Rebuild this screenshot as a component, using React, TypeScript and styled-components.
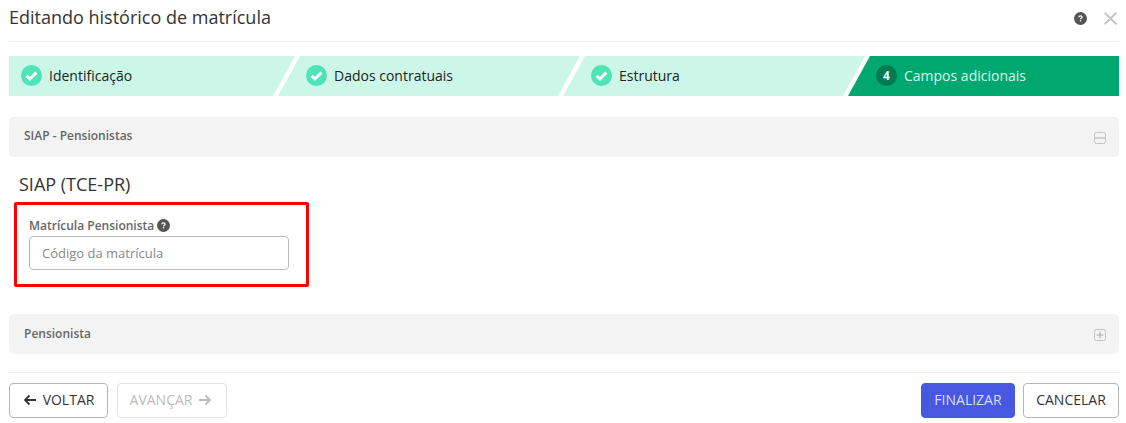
import React from 'react';
import styled, { createGlobalStyle } from 'styled-components';

const GlobalStyle = createGlobalStyle`
  html, body { margin: 0; padding: 0; background: #fff; }
  body { font-family: "Open Sans", "Liberation Sans", sans-serif; }
  * { box-sizing: border-box; }
`;

const Modal = styled.div`
  width: 1126px;
  height: 423px;
  padding: 0 7px 0 9px;
  display: flex;
  flex-direction: column;
  overflow: hidden;
`;

const Header = styled.header`
  height: 42px;
  padding-bottom: 6px;
  display: flex;
  align-items: center;
  justify-content: space-between;
  border-bottom: 1px solid #f0f0f0;
`;

const Title = styled.h1`
  margin: 0 0 2px;
  font-size: 18px;
  font-weight: 400;
  color: #333;
`;

const HeaderActions = styled.div`
  display: flex;
  align-items: center;
  gap: 17px;
  padding: 1px 2px 0 0;
`;

const Steps = styled.div`
  display: flex;
  margin-top: 14px;
  height: 40px;
`;

type StepPos = 'first' | 'middle' | 'last';

const clipFor: Record<StepPos, string> = {
  first: 'polygon(0 0, 100% 0, calc(100% - 22px) 100%, 0 100%)',
  middle: 'polygon(22px 0, 100% 0, calc(100% - 22px) 100%, 0 100%)',
  last: 'polygon(22px 0, 100% 0, 100% 100%, 0 100%)',
};

const Step = styled.div<{ $pos: StepPos; $active?: boolean; $width: number }>`
  flex: 0 0 ${(p) => p.$width}px;
  margin-left: ${(p) => (p.$pos === 'first' ? '0' : '-17px')};
  padding-left: ${(p) => (p.$pos === 'first' ? '12px' : '28px')};
  padding-bottom: 1px;
  display: flex;
  align-items: center;
  gap: 7px;
  font-size: 14px;
  background: ${(p) => (p.$active ? '#00a870' : '#ccf7e8')};
  color: ${(p) => (p.$active ? '#d5f8ea' : '#222')};
  clip-path: ${(p) => clipFor[p.$pos]};
`;

const StepNumber = styled.span`
  width: 21px;
  height: 21px;
  border-radius: 50%;
  background: #007a55;
  color: #e6faf2;
  font-size: 12px;
  font-weight: 700;
  display: flex;
  align-items: center;
  justify-content: center;
`;

const Section = styled.div<{ $mt: number; $pb: number }>`
  margin-top: ${(p) => p.$mt}px;
  height: 40px;
  padding: 0 13px ${(p) => p.$pb}px 15px;
  display: flex;
  align-items: center;
  justify-content: space-between;
  background: #f3f3f3;
  border-radius: 5px;
  font-size: 12px;
  font-weight: 600;
  color: #666;
`;

const SectionToggle = styled.span<{ $mt: number }>`
  display: flex;
  margin-top: ${(p) => p.$mt}px;
`;

const Body = styled.div`
  padding: 16px 0 0 5px;
`;

const GroupTitle = styled.h2`
  margin: 0 0 7px 5px;
  font-size: 18px;
  line-height: 22px;
  font-weight: 400;
  color: #333;
`;

const Highlight = styled.div`
  width: 295px;
  height: 85px;
  padding: 12px 0 0 12px;
  border: 3px solid #ff0000;
  border-radius: 2px;
`;

const Label = styled.label`
  display: flex;
  align-items: center;
  gap: 3px;
  height: 16px;
  margin-bottom: 3px;
  font-size: 12px;
  font-weight: 600;
  color: #666;
`;

const Input = styled.input`
  display: block;
  width: 260px;
  height: 34px;
  padding: 0 12px;
  border: 1px solid #bbb;
  border-radius: 4px;
  font-family: inherit;
  font-size: 13px;
  outline: none;
  &::placeholder { color: #888; opacity: 1; }
`;

const Footer = styled.footer`
  margin-top: 18px;
  padding-top: 10px;
  border-top: 1px solid #f0f0f0;
  display: flex;
  justify-content: space-between;
`;

const ButtonGroup = styled.div<{ $gap: number }>`
  display: flex;
  gap: ${(p) => p.$gap}px;
`;

const Button = styled.button<{ $variant?: 'primary' | 'disabled'; $width: number }>`
  width: ${(p) => p.$width}px;
  height: 35px;
  padding: 0 ${(p) => (p.$variant === 'disabled' ? '2px' : '0')} 2px 0;
  display: flex;
  align-items: center;
  justify-content: center;
  gap: 6px;
  font-family: inherit;
  font-size: 14px;
  border-radius: 4px;
  background: ${(p) => (p.$variant === 'primary' ? '#4759e0' : '#fff')};
  border: 1px solid ${(p) => (p.$variant === 'primary' ? '#4759e0' : p.$variant === 'disabled' ? '#e2e2e2' : '#b5b5b5')};
  color: ${(p) => (p.$variant === 'primary' ? '#d9defa' : p.$variant === 'disabled' ? '#bbb' : '#333')};
`;

const CheckIcon = () => (
  <svg width="21" height="21" viewBox="0 0 21 21">
    <circle cx="10.5" cy="10.5" r="10.5" fill="#4fe3b8" />
    <path d="M5.6 10.8l3.3 3.2 6.5-6.4" fill="none" stroke="#fff" strokeWidth="3" />
  </svg>
);

const HelpIcon = () => (
  <svg width="13" height="13" viewBox="0 0 12 12">
    <circle cx="6" cy="6" r="6" fill="#555" />
    <path d="M4.5 4.8c0-.9.7-1.3 1.5-1.3s1.5.4 1.5 1.2c0 1.1-1.5 1-1.5 2" fill="none" stroke="#fff" strokeWidth="1.1" />
    <rect x="5.4" y="7.5" width="1.2" height="1.2" fill="#fff" />
  </svg>
);

const CloseIcon = () => (
  <svg width="13" height="13" viewBox="0 0 13 13">
    <path d="M.7.7l11.6 11.6M12.3.7L.7 12.3" stroke="#c4c4c4" strokeWidth="2" fill="none" />
  </svg>
);

const BoxIcon = ({ plus }: { plus?: boolean }) => (
  <SectionToggle $mt={plus ? 3 : 5}>
    <svg width="12" height="12" viewBox="0 0 12 12">
      <rect x=".5" y=".5" width="11" height="11" rx="2" fill="none" stroke="#c4c4c4" />
      <path d={plus ? 'M2.5 6h7' : 'M1 6h10'} stroke="#aaa" />
      {plus && <path d="M6 2.5v7" stroke="#aaa" />}
    </svg>
  </SectionToggle>
);

const ArrowIcon = ({ right, color }: { right?: boolean; color: string }) => (
  <svg width="14" height="12" viewBox="0 0 14 12">
    {right ? (
      <path d="M1 6h11M7.5 1.5L12 6l-4.5 4.5" fill="none" stroke={color} strokeWidth="1.8" />
    ) : (
      <path d="M13 6H2M6.5 1.5L2 6l4.5 4.5" fill="none" stroke={color} strokeWidth="1.8" />
    )}
  </svg>
);

export default function App() {
  return (
    <Modal>
      <GlobalStyle />
      <Header>
        <Title>Editando histórico de matrícula</Title>
        <HeaderActions>
          <HelpIcon />
          <CloseIcon />
        </HeaderActions>
      </Header>

      <Steps>
        <Step $pos="first" $width={286}>
          <CheckIcon />
          Identificação
        </Step>
        <Step $pos="middle" $width={302}>
          <CheckIcon />
          Dados contratuais
        </Step>
        <Step $pos="middle" $width={302}>
          <CheckIcon />
          Estrutura
        </Step>
        <Step $pos="last" $width={271} $active>
          <StepNumber>4</StepNumber>
          Campos adicionais
        </Step>
      </Steps>

      <Section $mt={21} $pb={4}>
        SIAP - Pensionistas
        <BoxIcon />
      </Section>

      <Body>
        <GroupTitle>SIAP (TCE-PR)</GroupTitle>
        <Highlight>
          <Label>
            Matrícula Pensionista
            <HelpIcon />
          </Label>
          <Input placeholder="Código da matrícula" />
        </Highlight>
      </Body>

      <Section $mt={27} $pb={2}>
        Pensionista
        <BoxIcon plus />
      </Section>

      <Footer>
        <ButtonGroup $gap={9}>
          <Button $width={99}>
            <ArrowIcon color="#333" />
            VOLTAR
          </Button>
          <Button $width={110} $variant="disabled">
            AVANÇAR
            <ArrowIcon right color="#bbb" />
          </Button>
        </ButtonGroup>
        <ButtonGroup $gap={8}>
          <Button $width={94} $variant="primary">
            FINALIZAR
          </Button>
          <Button $width={96}>CANCELAR</Button>
        </ButtonGroup>
      </Footer>
    </Modal>
  );
}
